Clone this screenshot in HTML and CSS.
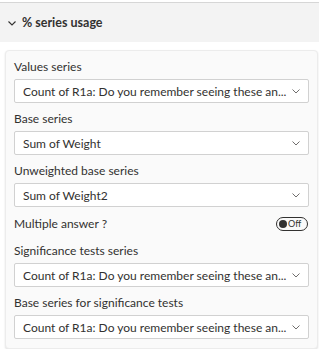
FILE: index.html
```
<!DOCTYPE html>
<html lang="en">

<head>
  <meta charset="UTF-8">
  <meta name="viewport" content="width=device-width, initial-scale=1.0">
  <title>% series usage</title>
  <link rel="stylesheet" href="styles.css">
</head>

<body>
  <div class="section-header">
    <svg class="chevron-head" width="8" height="5" viewBox="0 0 8 5"><path d="M0.5 0.5 L4 4 L7.5 0.5" fill="none" stroke="#323130" stroke-width="1.1"/></svg>
    <span>% series usage</span>
  </div>

  <div class="card">
    <div class="field">
      <div class="label">Values series</div>
      <div class="dropdown">
        <span class="value">Count of R1a: Do you remember seeing these an...</span>
        <svg class="chev" width="8" height="5" viewBox="0 0 8 5"><path d="M0.5 0.5 L4 4 L7.5 0.5" fill="none" stroke="#605e5c" stroke-width="0.9"/></svg>
      </div>
    </div>
    <div class="field">
      <div class="label">Base series</div>
      <div class="dropdown">
        <span class="value">Sum of Weight</span>
        <svg class="chev" width="8" height="5" viewBox="0 0 8 5"><path d="M0.5 0.5 L4 4 L7.5 0.5" fill="none" stroke="#605e5c" stroke-width="0.9"/></svg>
      </div>
    </div>
    <div class="field">
      <div class="label">Unweighted base series</div>
      <div class="dropdown">
        <span class="value">Sum of Weight2</span>
        <svg class="chev" width="8" height="5" viewBox="0 0 8 5"><path d="M0.5 0.5 L4 4 L7.5 0.5" fill="none" stroke="#605e5c" stroke-width="0.9"/></svg>
      </div>
    </div>
    <div class="toggle-row">
      <div class="label">Multiple answer ?</div>
      <div class="toggle"><span class="knob"></span><span class="toggle-text">Off</span></div>
    </div>
    <div class="field">
      <div class="label">Significance tests series</div>
      <div class="dropdown">
        <span class="value">Count of R1a: Do you remember seeing these an...</span>
        <svg class="chev" width="8" height="5" viewBox="0 0 8 5"><path d="M0.5 0.5 L4 4 L7.5 0.5" fill="none" stroke="#605e5c" stroke-width="0.9"/></svg>
      </div>
    </div>
    <div class="field">
      <div class="label">Base series for significance tests</div>
      <div class="dropdown">
        <span class="value">Count of R1a: Do you remember seeing these an...</span>
        <svg class="chev" width="8" height="5" viewBox="0 0 8 5"><path d="M0.5 0.5 L4 4 L7.5 0.5" fill="none" stroke="#605e5c" stroke-width="0.9"/></svg>
      </div>
    </div>
  </div>
</body>

</html>
```

FILE: styles.css
```
body {
  margin: 0;
  padding-top: 2px;
  background: #fff;
  font-family: Lato, "Open Sans", sans-serif;
  font-size: 12px;
  color: #323130;
}

.section-header {
  height: 39px;
  border-top: 1px solid #d6d6d6;
  background: #f3f3f3;
  display: flex;
  align-items: center;
  padding-left: 8px;
  font-weight: 700;
  font-size: 12.5px;
}

.chevron-head {
  margin-right: 6px;
  margin-top: 1px;
}

.card {
  margin: 8px 1px 0 5px;
  background: #fafafa;
  border: 1px solid #ececec;
  border-radius: 4px;
  box-shadow: 0 1px 2px rgba(0, 0, 0, 0.12);
  padding: 6px 8px 9px 8px;
  display: flex;
  flex-direction: column;
  gap: 6px;
}

.label {
  line-height: 20px;
  white-space: nowrap;
}

.field .label {
  margin-bottom: 2px;
}

.dropdown {
  height: 24px;
  box-sizing: border-box;
  background: #fff;
  border: 1px solid #d1d1d1;
  border-radius: 2px;
  display: flex;
  align-items: center;
  padding: 0 8px 0 8px;
}

.value {
  flex: 1;
  overflow: hidden;
  white-space: nowrap;
}

.chev {
  margin-left: 4px;
  flex: none;
}

.toggle-row {
  height: 22px;
  display: flex;
  align-items: center;
  justify-content: space-between;
}

.toggle {
  width: 32px;
  height: 14px;
  box-sizing: border-box;
  border: 1px solid #323130;
  border-radius: 7px;
  display: flex;
  align-items: center;
  padding-left: 2px;
  margin-right: 1px;
}

.knob {
  width: 8px;
  height: 8px;
  border-radius: 50%;
  background: #323130;
}

.toggle-text {
  font-size: 9px;
  margin-left: 1px;
  line-height: 12px;
}
```
